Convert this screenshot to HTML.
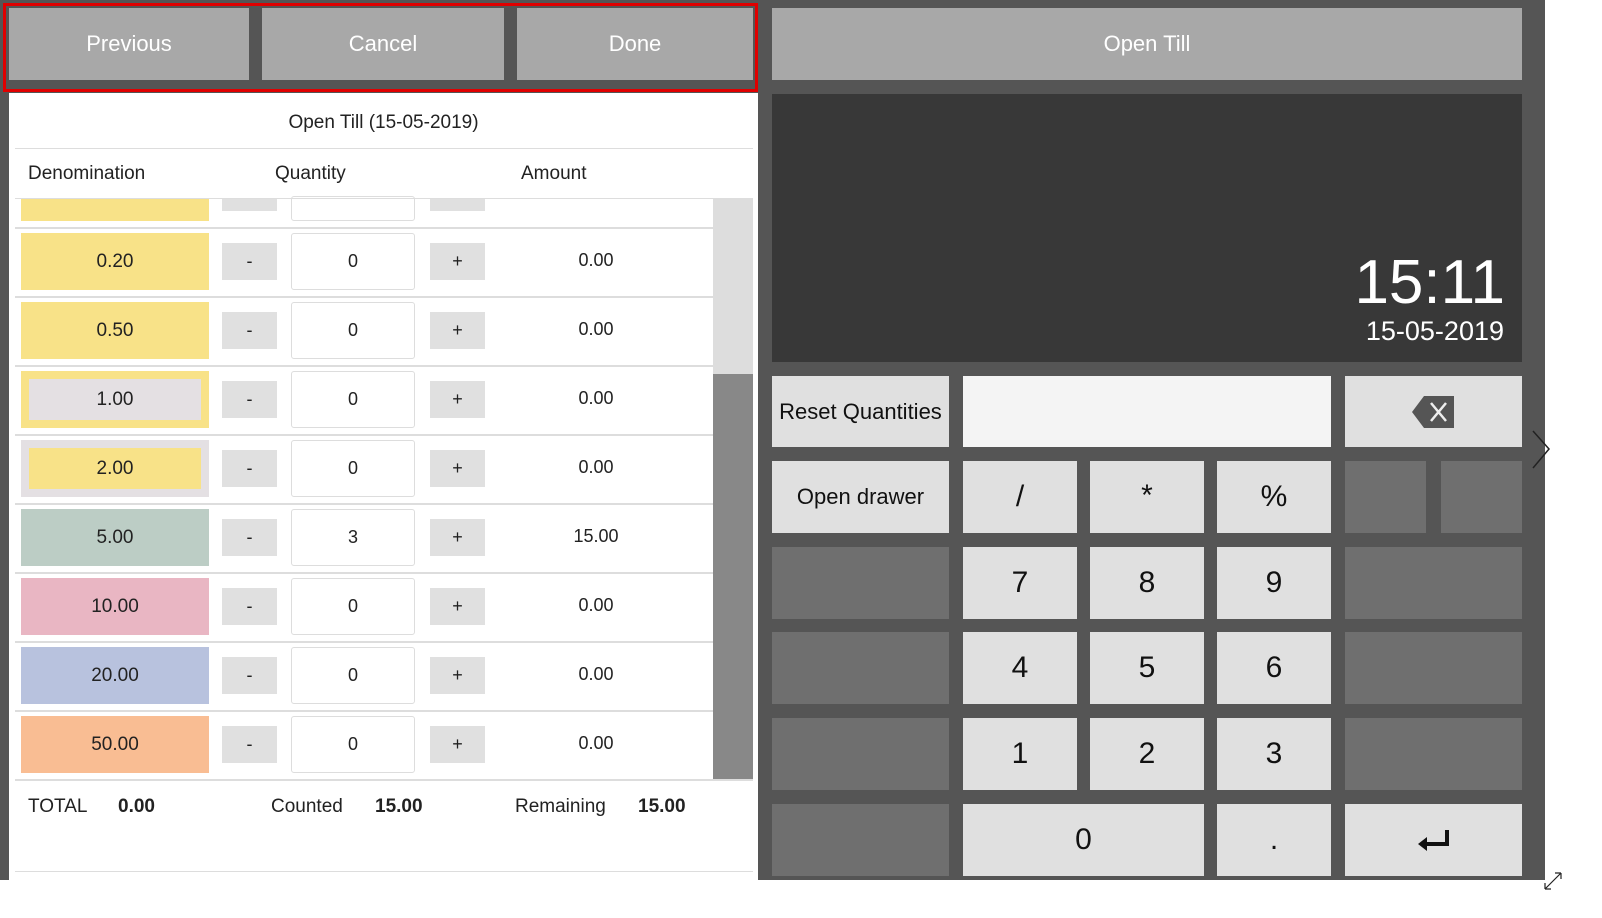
<!DOCTYPE html>
<html><head><meta charset="utf-8"><style>
*{margin:0;padding:0;box-sizing:border-box}
body{width:1602px;height:918px;background:#fff;position:relative;overflow:hidden;font-family:"Liberation Sans",sans-serif;color:#222}
.a{position:absolute}
.bg{left:0;top:0;width:1545px;height:880px;background:#555}
.tb{background:#a8a8a8;color:#fff;font-size:22px;display:flex;align-items:center;justify-content:center;top:8px;height:72px}
.k{background:#e0e0e0;display:flex;align-items:center;justify-content:center;font-size:30px;color:#111}
.g{background:#6f6f6f}
.den{left:21px;width:188px;height:57px;display:flex;align-items:center;justify-content:center;font-size:19px}
.btn{background:#e0e0e0;width:55px;height:37px;display:flex;align-items:center;justify-content:center;font-size:18px}
.inp{left:291px;width:124px;height:57px;border:1px solid #ddd;border-radius:3px;background:#fff;display:flex;align-items:center;justify-content:center;font-size:18px}
.amt{left:520px;width:152px;text-align:center;font-size:18px}
.ln{left:15px;width:738px;height:2px;background:#ddd}
.rl{width:698px}
</style></head><body>
<div class="a bg"></div>
<div class="a tb" style="left:9px;width:240px">Previous</div>
<div class="a tb" style="left:262px;width:242px">Cancel</div>
<div class="a tb" style="left:517px;width:236px">Done</div>
<div class="a" style="left:3px;top:3px;width:755px;height:89px;border:3px solid #e00000"></div>
<div class="a" style="left:9px;top:93px;width:749px;height:787px;background:#fff"></div>
<div class="a" style="left:9px;top:112px;width:749px;text-align:center;font-size:19px">Open Till (15-05-2019)</div>
<div class="a ln" style="top:148px;height:1px"></div>
<div class="a" style="left:28px;top:163px;font-size:19px">Denomination</div>
<div class="a" style="left:275px;top:163px;font-size:19px">Quantity</div>
<div class="a" style="left:521px;top:163px;font-size:19px">Amount</div>
<div class="a ln" style="top:198px;height:1px"></div>
<div class="a" style="left:713px;top:199px;width:40px;height:580px;background:#ddd"></div>
<div class="a" style="left:713px;top:374px;width:40px;height:405px;background:#888"></div>
<div class="a" style="left:21px;top:199px;width:188px;height:22px;background:#f8e288"></div>
<div class="a" style="left:222px;top:199px;width:55px;height:12px;background:#e0e0e0"></div>
<div class="a" style="left:291px;top:196px;width:124px;height:25px;border:1px solid #ddd;border-radius:3px"></div>
<div class="a" style="left:430px;top:199px;width:55px;height:12px;background:#e0e0e0"></div>
<div class="a ln rl" style="top:227px"></div>

<div class="a den" style="top:233px;background:#f8e288">0.20</div>
<div class="a btn" style="left:222px;top:243px">-</div><div class="a inp" style="top:233px">0</div><div class="a btn" style="left:430px;top:243px">+</div><div class="a amt" style="top:250px">0.00</div>
<div class="a ln rl" style="top:296px"></div>
<div class="a den" style="top:302px;background:#f8e288">0.50</div>
<div class="a btn" style="left:222px;top:312px">-</div><div class="a inp" style="top:302px">0</div><div class="a btn" style="left:430px;top:312px">+</div><div class="a amt" style="top:319px">0.00</div>
<div class="a ln rl" style="top:365px"></div>
<div class="a den" style="top:371px;background:#f8e288;border:8px solid #f8e288"><div style="background:#e4e0e3;width:100%;height:100%;display:flex;align-items:center;justify-content:center">1.00</div></div>
<div class="a btn" style="left:222px;top:381px">-</div><div class="a inp" style="top:371px">0</div><div class="a btn" style="left:430px;top:381px">+</div><div class="a amt" style="top:388px">0.00</div>
<div class="a ln rl" style="top:434px"></div>
<div class="a den" style="top:440px;background:#f8e288;border:8px solid #e4e0e3">2.00</div>
<div class="a btn" style="left:222px;top:450px">-</div><div class="a inp" style="top:440px">0</div><div class="a btn" style="left:430px;top:450px">+</div><div class="a amt" style="top:457px">0.00</div>
<div class="a ln rl" style="top:503px"></div>
<div class="a den" style="top:509px;background:#bccdc5">5.00</div>
<div class="a btn" style="left:222px;top:519px">-</div><div class="a inp" style="top:509px">3</div><div class="a btn" style="left:430px;top:519px">+</div><div class="a amt" style="top:526px">15.00</div>
<div class="a ln rl" style="top:572px"></div>
<div class="a den" style="top:578px;background:#e9b6c3">10.00</div>
<div class="a btn" style="left:222px;top:588px">-</div><div class="a inp" style="top:578px">0</div><div class="a btn" style="left:430px;top:588px">+</div><div class="a amt" style="top:595px">0.00</div>
<div class="a ln rl" style="top:641px"></div>
<div class="a den" style="top:647px;background:#b8c2de">20.00</div>
<div class="a btn" style="left:222px;top:657px">-</div><div class="a inp" style="top:647px">0</div><div class="a btn" style="left:430px;top:657px">+</div><div class="a amt" style="top:664px">0.00</div>
<div class="a ln rl" style="top:710px"></div>
<div class="a den" style="top:716px;background:#f9bd93">50.00</div>
<div class="a btn" style="left:222px;top:726px">-</div><div class="a inp" style="top:716px">0</div><div class="a btn" style="left:430px;top:726px">+</div><div class="a amt" style="top:733px">0.00</div>
<div class="a ln" style="top:779px"></div>
<div class="a" style="left:28px;top:796px;font-size:19px">TOTAL</div>
<div class="a" style="left:118px;top:796px;font-size:19px;font-weight:bold">0.00</div>
<div class="a" style="left:271px;top:796px;font-size:19px">Counted</div>
<div class="a" style="left:375px;top:796px;font-size:19px;font-weight:bold">15.00</div>
<div class="a" style="left:515px;top:796px;font-size:19px">Remaining</div>
<div class="a" style="left:638px;top:796px;font-size:19px;font-weight:bold">15.00</div>
<div class="a ln" style="top:871px;height:1px"></div>

<div class="a tb" style="left:772px;width:750px">Open Till</div>
<div class="a" style="left:772px;top:94px;width:750px;height:268px;background:#383838"></div>
<div class="a" style="left:1300px;top:248px;width:205px;text-align:right;color:#fff;font-size:62px;line-height:70px">15:11</div>
<div class="a" style="left:1300px;top:316px;width:204px;text-align:right;color:#fff;font-size:27px">15-05-2019</div>

<div class="a k" style="left:772px;top:376px;width:177px;height:71px;font-size:22px">Reset Quantities</div>
<div class="a" style="left:963px;top:376px;width:368px;height:71px;background:#f4f4f4"></div>
<div class="a k" style="left:1345px;top:376px;width:177px;height:71px"><svg width="44" height="34" viewBox="0 0 44 34"><path d="M0 17 L12 1 H42 V33 H12 Z" fill="#555"/><path d="M19 8 L34 26 M34 8 L19 26" stroke="#eee" stroke-width="2.5"/></svg></div>
<div class="a k" style="left:772px;top:461px;width:177px;height:72px;font-size:22px">Open drawer</div>
<div class="a k" style="left:963px;top:461px;width:114px;height:72px">/</div>
<div class="a k" style="left:1090px;top:461px;width:114px;height:72px;align-items:flex-start;padding-top:18px">*</div>
<div class="a k" style="left:1217px;top:461px;width:114px;height:72px">%</div>
<div class="a g" style="left:1345px;top:461px;width:81px;height:72px"></div>
<div class="a g" style="left:1441px;top:461px;width:81px;height:72px"></div>
<div class="a g" style="left:772px;top:547px;width:177px;height:72px"></div>
<div class="a k" style="left:963px;top:547px;width:114px;height:72px">7</div>
<div class="a k" style="left:1090px;top:547px;width:114px;height:72px">8</div>
<div class="a k" style="left:1217px;top:547px;width:114px;height:72px">9</div>
<div class="a g" style="left:1345px;top:547px;width:177px;height:72px"></div>
<div class="a g" style="left:772px;top:632px;width:177px;height:72px"></div>
<div class="a k" style="left:963px;top:632px;width:114px;height:72px">4</div>
<div class="a k" style="left:1090px;top:632px;width:114px;height:72px">5</div>
<div class="a k" style="left:1217px;top:632px;width:114px;height:72px">6</div>
<div class="a g" style="left:1345px;top:632px;width:177px;height:72px"></div>
<div class="a g" style="left:772px;top:718px;width:177px;height:72px"></div>
<div class="a k" style="left:963px;top:718px;width:114px;height:72px">1</div>
<div class="a k" style="left:1090px;top:718px;width:114px;height:72px">2</div>
<div class="a k" style="left:1217px;top:718px;width:114px;height:72px">3</div>
<div class="a g" style="left:1345px;top:718px;width:177px;height:72px"></div>
<div class="a g" style="left:772px;top:804px;width:177px;height:72px"></div>
<div class="a k" style="left:963px;top:804px;width:241px;height:72px">0</div>
<div class="a k" style="left:1217px;top:804px;width:114px;height:72px">.</div>
<div class="a k" style="left:1345px;top:804px;width:177px;height:72px"><svg width="34" height="24" viewBox="0 0 34 24"><path d="M30 2 V16 H6" stroke="#111" stroke-width="4" fill="none"/><path d="M1 16 L10 9 V23 Z" fill="#111"/></svg></div>
<svg class="a" style="left:1530px;top:428px" width="24" height="44"><path d="M3 3 L19 21 L3 40" stroke="#222" stroke-width="1.5" fill="none"/></svg>
<svg class="a" style="left:1542px;top:870px" width="22" height="22"><path d="M3 19 L19 3 M3 19 V13 M3 19 H9 M19 3 V9 M19 3 H13" stroke="#222" stroke-width="1.2" fill="none"/></svg>
</body></html>
